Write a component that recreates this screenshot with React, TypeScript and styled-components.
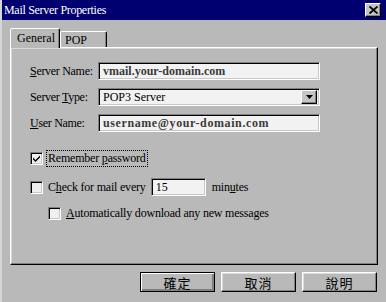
import React from "react";
import styled, { createGlobalStyle } from "styled-components";

const GlobalStyle = createGlobalStyle`
  html, body {
    margin: 0;
    padding: 0;
    background: #b9b9b9;
  }
  * {
    box-sizing: border-box;
  }
`;

const face = "#b9b9b9";

const Window = styled.div`
  width: 386px;
  height: 302px;
  background: ${face};
  border-left: 2px solid #d6d6d6;
  display: flex;
  flex-direction: column;
  font-family: "Liberation Serif", "Noto Sans CJK TC", serif;
  font-size: 12px;
  color: #000;
  overflow: hidden;
`;

const TitleBar = styled.div`
  height: 20px;
  margin-left: -2px;
  background: #000070;
  color: #fff;
  display: flex;
  align-items: center;
  justify-content: space-between;
  padding: 0 5px 0 4px;
`;

const TitleText = styled.span`
  font-size: 12px;
  letter-spacing: -0.3px;
`;

const CloseButton = styled.div`
  width: 16px;
  height: 14px;
  background: #c4c4c4;
  border: 1px solid;
  border-color: #fff #000 #000 #fff;
  box-shadow: inset -1px -1px #808080;
  display: flex;
  align-items: center;
  justify-content: center;
`;

const Body = styled.div`
  flex: 1;
  display: flex;
  flex-direction: column;
  padding: 8px 8px 0 8px;
`;

const TabStrip = styled.div`
  display: flex;
  align-items: flex-end;
  height: 19px;
`;

const Tab = styled.div<{ $active?: boolean }>`
  height: ${(p) => (p.$active ? "20px" : "16px")};
  width: ${(p) => (p.$active ? "50px" : "47px")};
  border: 1px solid;
  border-bottom: none;
  border-color: #fff #000 transparent #fff;
  border-radius: 2px 2px 0 0;
  box-shadow: inset -1px 0 #808080;
  background: ${face};
  padding: ${(p) => (p.$active ? "2px 0 0 6px" : "1px 0 0 4px")};
  margin-bottom: ${(p) => (p.$active ? "-1px" : "0")};
  position: relative;
  z-index: ${(p) => (p.$active ? 1 : 0)};
  font-size: 12px;
`;

const Panel = styled.div`
  height: 218px;
  border: 1px solid;
  border-color: #fff #000 #000 #fff;
  box-shadow: inset -1px -1px #808080, inset 1px 1px #d8d8d8;
  padding: 14px 0 0 19px;
  display: flex;
  flex-direction: column;
`;

const FieldRow = styled.div`
  display: flex;
  align-items: center;
  height: 18px;
  margin-bottom: 8px;
`;

const Label = styled.span`
  width: 68px;
  white-space: nowrap;
  letter-spacing: -0.3px;
`;

const Field = styled.div<{ $width: number; $bold?: boolean; $spaced?: boolean }>`
  width: ${(p) => p.$width}px;
  height: 18px;
  background: #f2f2f2;
  border: 1px solid;
  border-color: #808080 #fff #fff #808080;
  box-shadow: inset 1px 1px #000, inset -1px -1px #c8c8c8;
  padding: 0 0 0 4px;
  display: flex;
  align-items: center;
  justify-content: space-between;
  font-weight: ${(p) => (p.$bold ? 700 : 400)};
  letter-spacing: ${(p) => (p.$spaced ? "0.6px" : "0")};
  color: ${(p) => (p.$bold ? "#3a3a3a" : "#000")};
  white-space: nowrap;
`;

const DropButton = styled.div`
  width: 16px;
  height: 14px;
  margin-right: 2px;
  background: #c4c4c4;
  border: 1px solid;
  border-color: #fff #000 #000 #fff;
  box-shadow: inset -1px -1px #808080;
  display: flex;
  align-items: center;
  justify-content: center;
`;

const CheckRow = styled.label<{ $indent?: number; $top: number; $height?: number }>`
  display: flex;
  align-items: center;
  height: ${(p) => p.$height ?? 16}px;
  margin-left: ${(p) => p.$indent ?? 0}px;
  margin-top: ${(p) => p.$top}px;
  white-space: nowrap;
`;

const Box = styled.span`
  width: 13px;
  height: 13px;
  background: #efefef;
  border: 1px solid;
  border-color: #808080 #fff #fff #808080;
  box-shadow: inset 1px 1px #000, inset -1px -1px #c8c8c8;
  display: flex;
  align-items: center;
  justify-content: center;
  margin-right: 4px;
  flex: none;
`;

const Caption = styled.span<{ $focus?: boolean }>`
  padding: 0 1px;
  outline: ${(p) => (p.$focus ? "1px dotted #000" : "none")};
  letter-spacing: -0.2px;
`;

const Mnemonic = styled.span`
  text-decoration: underline;
  text-underline-offset: 1px;
`;

const Minutes = styled.span`
  margin-left: 6px;
  letter-spacing: -0.2px;
`;

const ButtonBar = styled.div`
  display: flex;
  justify-content: flex-end;
  gap: 6px;
  margin-top: 7px;
  padding-right: 1px;
`;

const Button = styled.div<{ $default?: boolean }>`
  width: 75px;
  height: 20px;
  background: ${face};
  border: 1px solid;
  border-color: ${(p) => (p.$default ? "#000" : "#fff #000 #000 #fff")};
  box-shadow: ${(p) =>
    p.$default
      ? "inset 1px 1px #fff, inset -2px -2px #808080, inset -1px -1px #000"
      : "inset -1px -1px #808080, inset 1px 1px #dcdcdc"};
  display: flex;
  align-items: center;
  justify-content: center;
  font-family: "Noto Sans CJK TC", sans-serif;
  font-size: 13px;
  letter-spacing: 1px;
`;

const Check = () => (
  <svg width="9" height="9" viewBox="0 0 9 9">
    <path d="M1 3.5 L3.5 6 L8 1.5 L8 3.5 L3.5 8 L1 5.5 Z" fill="#000" />
  </svg>
);

export default function App() {
  return (
    <>
      <GlobalStyle />
      <Window>
        <TitleBar>
          <TitleText>Mail Server Properties</TitleText>
          <CloseButton>
            <svg width="9" height="8" viewBox="0 0 9 8">
              <path d="M0.5 0.5 L8.5 7.5 M8.5 0.5 L0.5 7.5" stroke="#000" strokeWidth="1.8" />
            </svg>
          </CloseButton>
        </TitleBar>
        <Body>
          <TabStrip>
            <Tab $active>General</Tab>
            <Tab>POP</Tab>
          </TabStrip>
          <Panel>
            <FieldRow>
              <Label>
                <Mnemonic>S</Mnemonic>erver Name:
              </Label>
              <Field $width={222} $bold>
                vmail.your-domain.com
              </Field>
            </FieldRow>
            <FieldRow>
              <Label>
                Server <Mnemonic>T</Mnemonic>ype:
              </Label>
              <Field $width={222}>
                POP3 Server
                <DropButton>
                  <svg width="7" height="4" viewBox="0 0 7 4">
                    <path d="M0 0 H7 L3.5 4 Z" fill="#000" />
                  </svg>
                </DropButton>
              </Field>
            </FieldRow>
            <FieldRow>
              <Label>
                <Mnemonic>U</Mnemonic>ser Name:
              </Label>
              <Field $width={222} $bold $spaced>
                username@your-domain.com
              </Field>
            </FieldRow>
            <CheckRow $top={10}>
              <Box>
                <Check />
              </Box>
              <Caption $focus>
                Remember <Mnemonic>p</Mnemonic>assword
              </Caption>
            </CheckRow>
            <CheckRow $top={12} $height={18}>
              <Box />
              <Caption>
                C<Mnemonic>h</Mnemonic>eck for mail every
              </Caption>
              <Field $width={55} style={{ marginLeft: 4 }}>
                15
              </Field>
              <Minutes>
                min<Mnemonic>u</Mnemonic>tes
              </Minutes>
            </CheckRow>
            <CheckRow $indent={18} $top={9}>
              <Box />
              <Caption>
                <Mnemonic>A</Mnemonic>utomatically download any new messages
              </Caption>
            </CheckRow>
          </Panel>
          <ButtonBar>
            <Button $default>確定</Button>
            <Button>取消</Button>
            <Button>說明</Button>
          </ButtonBar>
        </Body>
      </Window>
    </>
  );
}
